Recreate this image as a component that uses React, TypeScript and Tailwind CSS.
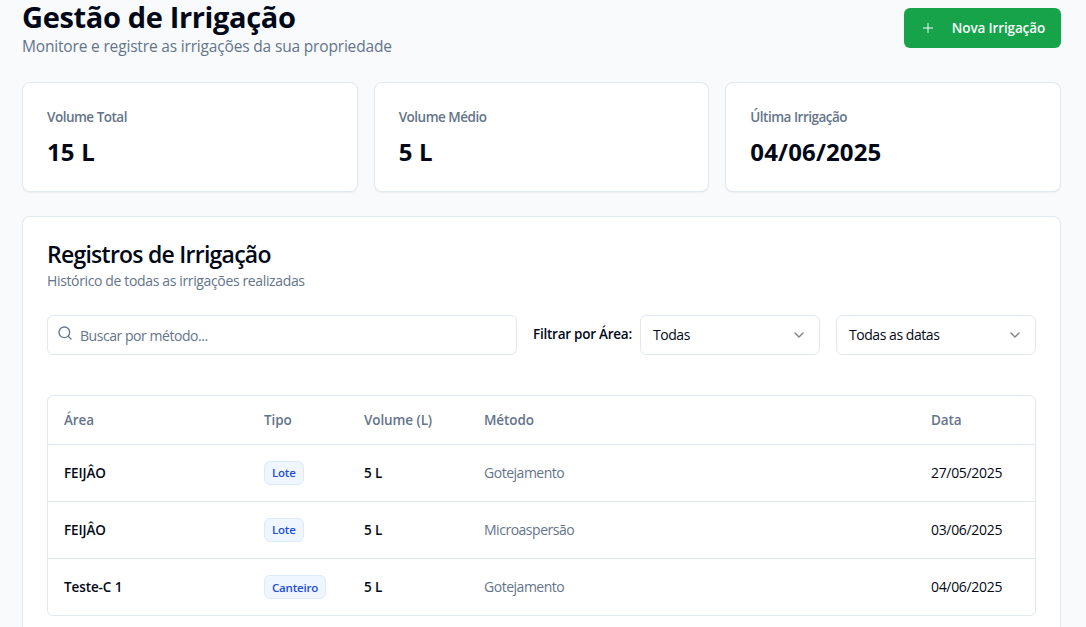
import React, { useState } from 'react';
import { ChevronDown, Plus, Search } from 'lucide-react';

interface Irrigacao {
  id: number;
  area: string;
  tipo: string;
  volume: number;
  metodo: string;
  data: string;
}

const irrigacoes: Irrigacao[] = [
  { id: 1, area: 'FEIJÂO', tipo: 'Lote', volume: 5, metodo: 'Gotejamento', data: '27/05/2025' },
  { id: 2, area: 'FEIJÂO', tipo: 'Lote', volume: 5, metodo: 'Microaspersão', data: '03/06/2025' },
  { id: 3, area: 'Teste-C 1', tipo: 'Canteiro', volume: 5, metodo: 'Gotejamento', data: '04/06/2025' },
];

function StatCard({ title, value }: { title: string; value: string }) {
  return (
    <div className="h-[110px] rounded-lg border border-[#e2e8f0] bg-white px-6 pt-6 shadow-[0_1px_2px_rgba(0,0,0,0.05)]">
      <p className="text-[13.5px] leading-5 font-semibold tracking-[-0.5px] text-[#64748b]">{title}</p>
      <p className="mt-[9px] text-2xl leading-8 font-bold tracking-[0.15px]">{value}</p>
    </div>
  );
}

export default function App() {
  const [busca, setBusca] = useState('');

  const filtradas = irrigacoes.filter((item) =>
    item.metodo.toLowerCase().includes(busca.toLowerCase())
  );

  return (
    <div className="h-[627px] overflow-hidden bg-[#f8fafc] pr-[25px] pl-[22px] font-['Open_Sans','Noto_Sans',sans-serif] text-[#020817]">
      {/* Header */}
      <div className="flex h-[58px] items-start justify-between">
        <div>
          <h1 className="text-[29px] leading-[34px] font-bold tracking-[-0.35px]">Gestão de Irrigação</h1>
          <p className="text-[15.5px] leading-6 tracking-[-0.17px] text-[#64748b]">
            Monitore e registre as irrigações da sua propriedade
          </p>
        </div>
        <button className="mt-2 flex h-10 w-[157px] items-center justify-between rounded-md bg-[#16a34a] px-4 text-[13.5px] font-semibold tracking-[-0.13px] text-[#f8fafc]">
          <Plus className="h-4 w-4" strokeWidth={1.5} />
          Nova Irrigação
        </button>
      </div>

      {/* Stats */}
      <div className="mt-6 grid grid-cols-3 gap-4">
        <StatCard title="Volume Total" value="15 L" />
        <StatCard title="Volume Médio" value="5 L" />
        <StatCard title="Última Irrigação" value="04/06/2025" />
      </div>

      {/* Records */}
      <div className="mt-6 h-[480px] rounded-lg border border-[#e2e8f0] bg-white p-6 shadow-[0_1px_2px_rgba(0,0,0,0.05)]">
        <h2 className="text-[23px] leading-[26px] font-semibold tracking-[-0.75px]">Registros de Irrigação</h2>
        <p className="mt-1 text-sm leading-5 tracking-[-0.36px] text-[#64748b]">
          Histórico de todas as irrigações realizadas
        </p>

        <div className="mt-6 flex items-center text-sm tracking-[-0.45px]">
          <div className="flex h-10 w-[470px] items-center gap-[7px] rounded-md border border-[#e2e8f0] px-[9px]">
            <Search className="mb-1 h-4 w-4 text-[#64748b]" />
            <input
              value={busca}
              onChange={(e) => setBusca(e.target.value)}
              placeholder="Buscar por método..."
              className="mt-0.5 flex-1 outline-none placeholder:text-[#64748b]"
            />
          </div>
          <span className="ml-4 w-[107px] text-[13.5px] font-semibold tracking-[-0.25px] whitespace-nowrap">
            Filtrar por Área:
          </span>
          <button className="flex h-10 w-[180px] items-center justify-between rounded-md border border-[#e2e8f0] px-3">
            Todas
            <ChevronDown className="h-4 w-4 opacity-50" />
          </button>
          <button className="ml-4 flex h-10 w-[200px] items-center justify-between rounded-md border border-[#e2e8f0] px-3">
            Todas as datas
            <ChevronDown className="h-4 w-4 opacity-50" />
          </button>
        </div>

        <div className="mt-10 overflow-hidden rounded-md border border-[#e2e8f0]">
          <table className="w-full table-fixed text-left text-[13.5px] tracking-[-0.1px]">
            <thead>
              <tr className="h-12 border-b border-[#e2e8f0] text-[#64748b]">
                <th className="w-[200px] px-4 font-semibold">Área</th>
                <th className="w-[100px] px-4 font-semibold">Tipo</th>
                <th className="w-[120px] px-4 font-semibold">Volume (L)</th>
                <th className="px-4 font-semibold">Método</th>
                <th className="w-[120px] px-4 font-semibold">Data</th>
              </tr>
            </thead>
            <tbody>
              {filtradas.map((item) => (
                <tr key={item.id} className="h-[57px] border-b border-[#e2e8f0] last:border-0">
                  <td className="px-4 pt-px font-semibold">{item.area}</td>
                  <td className="px-4">
                    <span className="inline-flex h-6 items-center rounded-md border border-[#dbeafe] bg-[#eff6ff] px-[7px] pt-px text-[11.5px] font-semibold tracking-[-0.2px] text-[#1d4ed8]">
                      {item.tipo}
                    </span>
                  </td>
                  <td className="px-4 pt-px font-semibold">{item.volume} L</td>
                  <td className="px-4 pt-px text-sm tracking-[-0.48px] text-[#64748b]">{item.metodo}</td>
                  <td className="px-4 pt-px text-sm tracking-[-0.32px]">{item.data}</td>
                </tr>
              ))}
            </tbody>
          </table>
        </div>
      </div>
    </div>
  );
}
